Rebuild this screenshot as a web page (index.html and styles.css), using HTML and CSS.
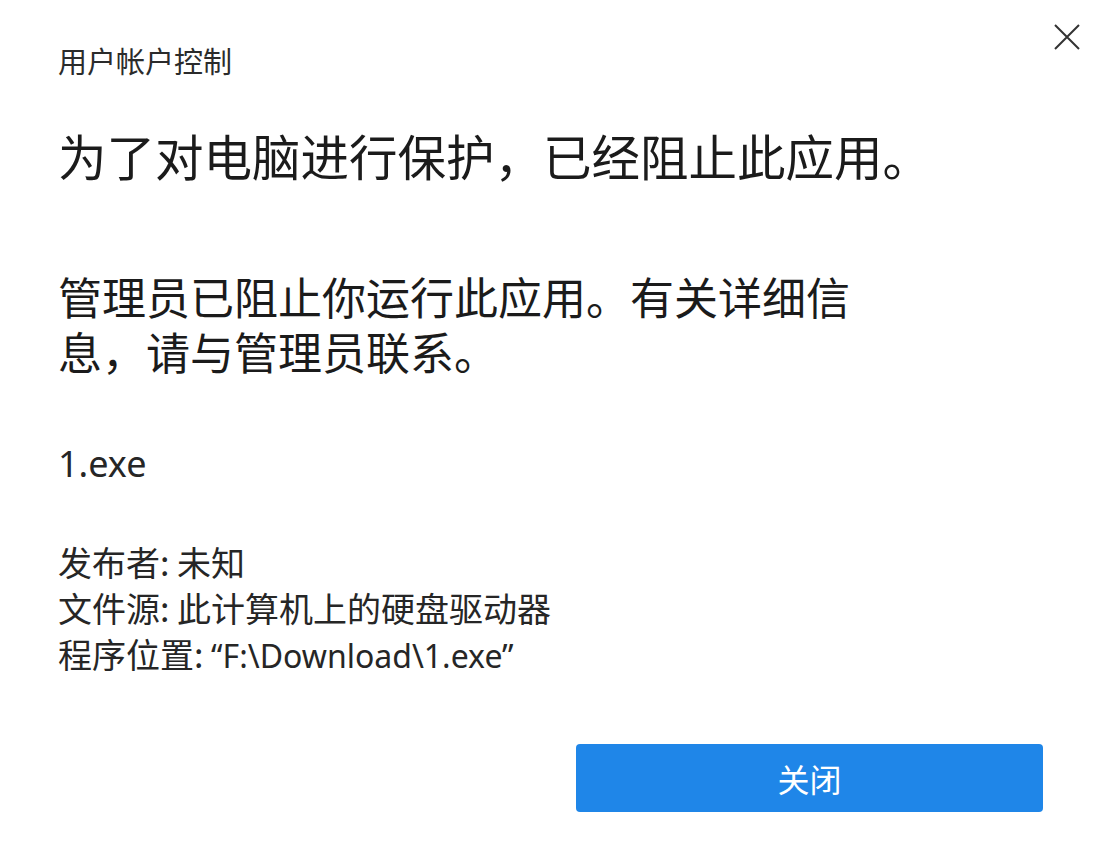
FILE: index.html
```html
<!DOCTYPE html>
<html>
<head>
    <title>用户帐户控制</title>
    <meta charset="utf-8">
	<link rel="stylesheet" href="styles.css">
</head>
<body>
<div id="dialog">

	<div class="header">
		<h1 class="caption">用户帐户控制</h1>
		<button class="close" aria-label="关闭">
			<svg width="26" height="26" viewBox="0 0 26 26">
				<path d="M1 1 L25 25 M25 1 L1 25" stroke="#333" stroke-width="2" fill="none"/>
			</svg>
		</button>
	</div>

	<div class="main">
		<h2 class="headline">为了对电脑进行保护，已经阻止此应用。</h2>
		<p class="message">管理员已阻止你运行此应用。有关详细信息，请与管理员联系。</p>
		<p class="program">1.exe</p>

		<ul class="details">
			<li>发布者: 未知</li>
			<li>文件源: 此计算机上的硬盘驱动器</li>
			<li>程序位置: <span class="path">“F:\Download\1.exe”</span></li>
		</ul>
	</div>

	<div class="footer">
		<button class="primary">关闭</button>
	</div>

</div>
</body>
</html>
```

FILE: styles.css
```css
/* Reset */

* { margin: 0; padding: 0; box-sizing: border-box; }

html, body {
	height: 100%;
}

body {
	background-color: white;
	font-family: "Noto Sans", "Noto Sans CJK SC", sans-serif;
	color: #1b1b1b;
}


/* Dialog */

#dialog {
	min-height: 100%;
	display: flex;
	flex-direction: column;
	border-top-left-radius: 8px;
}


/* Header */

.header {
	display: flex;
	justify-content: space-between;
	align-items: flex-start;
	padding: 24px 20px 0 58px;
}

.caption {
	margin-top: 21px;
	font-size: 29px;
	line-height: 34px;
	font-weight: 400;
	color: #2b2b2b;
}

.close {
	border: 0;
	background: none;
	width: 26px;
	height: 26px;
	cursor: pointer;
}

.close svg {
	display: block;
}


/* Main */

.main {
	padding-left: 58px;
}

.headline {
	margin-top: 50px;
	font-size: 48.5px;
	line-height: 56px;
	font-weight: 400;
}

.message {
	margin-top: 86px;
	max-width: 820px;
	font-size: 44px;
	line-height: 55px;
}

.program {
	margin-top: 61px;
	font-size: 36px;
	line-height: 44px;
	color: #262626;
}

.details {
	list-style-type: none;
	margin-top: 53px;
	font-family: "Noto Sans CJK SC", sans-serif;
	font-size: 34px;
	line-height: 46px;
	color: #262626;
}

.details .path {
	font-family: "Noto Sans", sans-serif;
	font-size: 32px;
}


/* Footer */

.footer {
	display: flex;
	justify-content: flex-end;
	padding: 65px 57px 0 0;
}

.primary {
	width: 467px;
	height: 68px;
	border: 0;
	border-radius: 4px;
	background-color: #1f86e8;
	color: white;
	font-family: "Noto Sans CJK SC", sans-serif;
	font-size: 32px;
	cursor: pointer;
}
```
